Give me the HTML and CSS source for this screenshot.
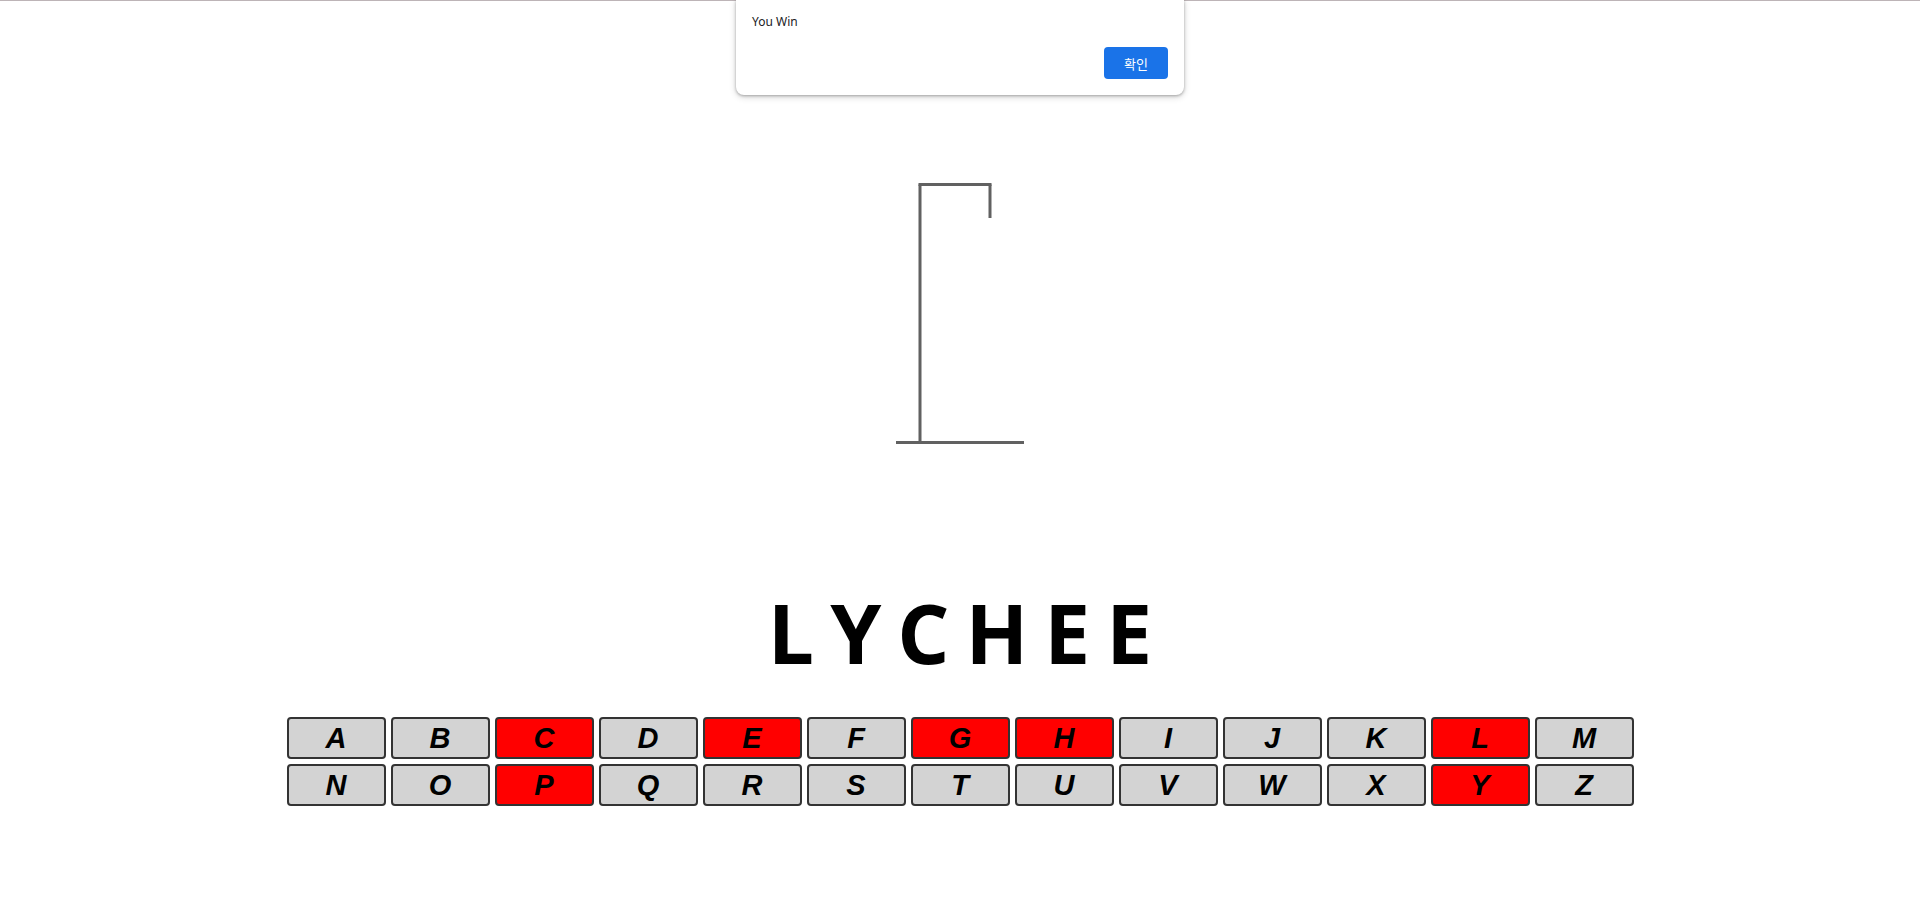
FILE: index.html
```html
<!DOCTYPE html>
<html lang="en">
<head>
<meta charset="utf-8">
<title>Hangman</title>
<link rel="stylesheet" href="styles.css">
</head>
<body>
<div class="topline"></div>
<main class="game">
  <svg class="gallows" width="200" height="280" viewBox="0 0 200 280">
    <line x1="60" y1="14.5" x2="60" y2="272.5" />
    <line x1="58.5" y1="14.5" x2="131.5" y2="14.5" />
    <line x1="130" y1="14.5" x2="130" y2="48" />
    <line x1="36" y1="272.5" x2="164" y2="272.5" />
  </svg>
  <h1 class="word">LYCHEE</h1>
  <div class="keyboard">
    <div class="row">
      <button class="key">A</button>
      <button class="key">B</button>
      <button class="key used">C</button>
      <button class="key">D</button>
      <button class="key used">E</button>
      <button class="key">F</button>
      <button class="key used">G</button>
      <button class="key used">H</button>
      <button class="key">I</button>
      <button class="key">J</button>
      <button class="key">K</button>
      <button class="key used">L</button>
      <button class="key">M</button>
    </div>
    <div class="row">
      <button class="key">N</button>
      <button class="key">O</button>
      <button class="key used">P</button>
      <button class="key">Q</button>
      <button class="key">R</button>
      <button class="key">S</button>
      <button class="key">T</button>
      <button class="key">U</button>
      <button class="key">V</button>
      <button class="key">W</button>
      <button class="key">X</button>
      <button class="key used">Y</button>
      <button class="key">Z</button>
    </div>
  </div>
</main>
<div class="alert">
  <p class="alert-msg">You Win</p>
  <div class="alert-actions">
    <button class="alert-ok">확인</button>
  </div>
</div>
</body>
</html>
```
FILE: styles.css
```css
html, body {
  margin: 0;
  padding: 0;
  background: #ffffff;
}
body {
  font-family: "Open Sans", "Noto Sans", sans-serif;
  min-height: 919px;
  position: relative;
}
.topline {
  height: 1px;
  background: #bdb4b7;
}
.game {
  display: flex;
  flex-direction: column;
  align-items: center;
}
.gallows {
  display: block;
  margin-top: 169px;
}
.gallows line {
  stroke: #616161;
  stroke-width: 3;
}
.word {
  margin: 141px 0 0 0;
  font-family: "Open Sans", sans-serif;
  font-weight: 700;
  font-size: 82px;
  line-height: 1;
  letter-spacing: 16px;
  padding-left: 16px;
  color: #000;
}
.keyboard {
  margin-top: 44px;
  display: flex;
  flex-direction: column;
  gap: 5px;
}
.row {
  display: flex;
  gap: 5px;
}
.key {
  width: 99px;
  height: 42px;
  padding: 0;
  border: 2px solid #333;
  border-radius: 4px;
  background: #d3d3d3;
  font-family: "Liberation Sans", Arial, sans-serif;
  font-weight: 700;
  font-style: italic;
  font-size: 29px;
  line-height: 38px;
  color: #000;
  text-align: center;
}
.key.used {
  background: #ff0000;
}
.alert {
  position: absolute;
  top: 0;
  left: 736px;
  width: 448px;
  height: 95px;
  box-sizing: border-box;
  padding: 14px 16px 16px 16px;
  background: #fff;
  border-radius: 0 0 8px 8px;
  box-shadow: 0 1px 3px rgba(0,0,0,0.3), 0 2px 6px 1px rgba(0,0,0,0.12);
  display: flex;
  flex-direction: column;
  justify-content: space-between;
}
.alert-msg {
  margin: 0;
  font-family: "Noto Sans", "Noto Sans CJK KR", sans-serif;
  font-size: 12px;
  line-height: 16px;
  color: #202124;
}
.alert-actions {
  display: flex;
  justify-content: flex-end;
}
.alert-ok {
  width: 64px;
  height: 32px;
  border: none;
  border-radius: 4px;
  background: #1a73e8;
  color: #fff;
  font-family: "Noto Sans CJK KR", sans-serif;
  font-size: 13px;
  padding: 0;
}
```
